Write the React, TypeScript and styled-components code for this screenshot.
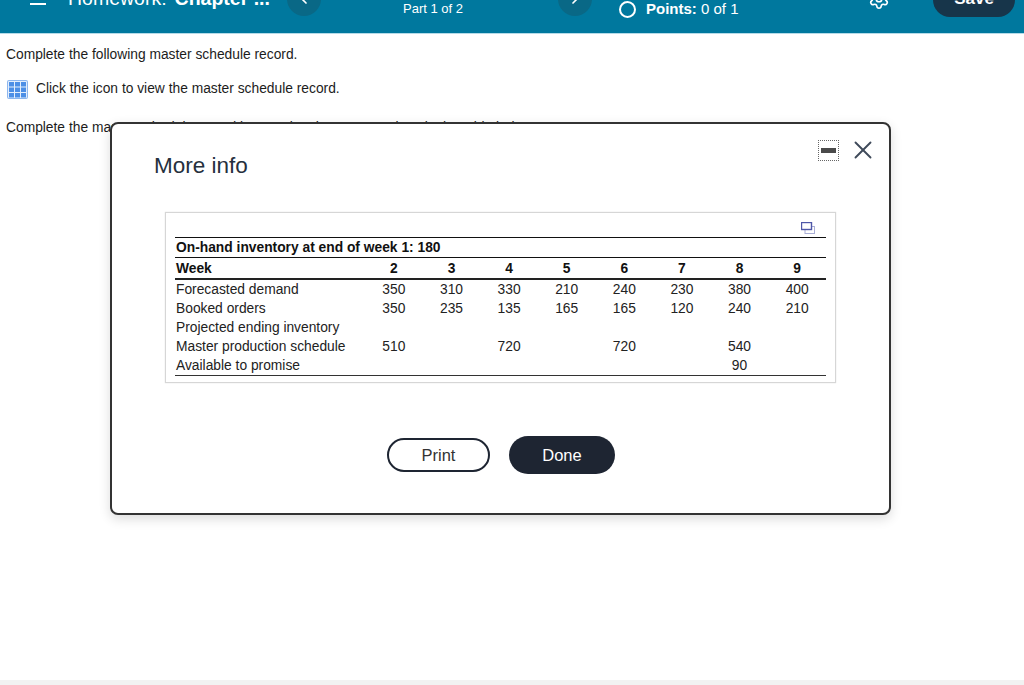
import React from 'react';
import styled, { createGlobalStyle } from 'styled-components';
import { ChevronLeft, ChevronRight, Settings, X } from 'lucide-react';

const GlobalStyle = createGlobalStyle`
  html, body {
    margin: 0;
    padding: 0;
    height: 100%;
    overflow: hidden;
    background: #fff;
    font-family: "Liberation Sans", Arial, sans-serif;
  }
`;

const Page = styled.div`
  position: relative;
  width: 1024px;
  height: 685px;
  display: flex;
  flex-direction: column;
  overflow: hidden;
`;

const Header = styled.header`
  flex: none;
  height: 34px;
  box-sizing: border-box;
  background: #00789e;
  border-bottom: 1px solid #b5dbe8;
  color: #fff;
  display: flex;
  align-items: flex-end;
  overflow: hidden;
`;

const MenuBar = styled.span`
  flex: none;
  width: 16px;
  height: 2px;
  background: #fff;
  margin: 0 0 28px 30px;
`;

const HeaderTitle = styled.div`
  width: 219px;
  margin-left: 22px;
  padding-bottom: 24px;
  font-size: 19.5px;
  line-height: 22px;
  white-space: nowrap;
  b {
    margin-left: 8px;
  }
`;

const NavButton = styled.span`
  flex: none;
  width: 34px;
  height: 34px;
  margin-bottom: 17px;
  border-radius: 50%;
  background: #096886;
  display: flex;
  align-items: center;
  justify-content: center;
`;

const PartSlot = styled.div`
  width: 237px;
  padding: 0 0 15px 82px;
  box-sizing: border-box;
  font-size: 13px;
  line-height: 18px;
  white-space: nowrap;
`;

const PointsGroup = styled.div`
  width: 249px;
  margin-left: 27px;
  padding-bottom: 15px;
  display: flex;
  align-items: center;
  gap: 10px;
  font-size: 15px;
  line-height: 18px;
  b {
    font-weight: 700;
  }
`;

const Ring = styled.span`
  flex: none;
  width: 13px;
  height: 13px;
  border: 2px solid #fff;
  border-radius: 50%;
`;

const GearSlot = styled.span`
  flex: none;
  width: 22px;
  margin-bottom: 23px;
  display: flex;
`;

const SaveButton = styled.span`
  flex: none;
  width: 82px;
  height: 34px;
  margin: 0 0 16px 43px;
  border-radius: 17px;
  background: #17354a;
  font-size: 17px;
  font-weight: 700;
  line-height: 32px;
  text-align: center;
`;

const Content = styled.main`
  padding: 12px 0 0 6px;
  color: #1c1c1c;
  font-size: 13.8px;
  line-height: 17px;
`;

const Paragraph = styled.p`
  margin: 0 0 16px;
  white-space: nowrap;
`;

const IconLine = styled.p`
  margin: 0 0 21px;
  display: flex;
  align-items: center;
  gap: 8px;
`;

const TableIcon = styled.svg`
  flex: none;
  margin: 1px 0 -1px 1px;
`;

const FootBar = styled.div`
  position: absolute;
  left: 0;
  right: 0;
  bottom: 0;
  height: 5px;
  background: #f2f2f2;
`;

const Modal = styled.section`
  position: absolute;
  left: 110px;
  top: 122px;
  width: 781px;
  height: 393px;
  box-sizing: border-box;
  padding: 29px 54px 0 42px;
  background: #fff;
  border: 2px solid #333;
  border-radius: 8px;
  box-shadow: 0 4px 12px rgba(0, 0, 0, 0.14);
  color: #222;
`;

const ModalTop = styled.div`
  display: flex;
  justify-content: space-between;
  align-items: flex-start;
`;

const ModalTitle = styled.h2`
  margin: 0;
  font-size: 22.5px;
  font-weight: 400;
  line-height: 26px;
  color: #26303d;
`;

const WindowControls = styled.div`
  position: absolute;
  top: 11px;
  right: 11px;
  display: flex;
  align-items: center;
  gap: 9px;
`;

const MinimizeButton = styled.span`
  width: 21px;
  height: 21px;
  box-sizing: border-box;
  border: 1px dotted #666;
  display: flex;
  align-items: center;
  justify-content: center;
  &::before {
    content: '';
    width: 15px;
    height: 5px;
    margin-top: 1px;
    background: #4a4a4a;
  }
`;

const TablePanel = styled.div`
  position: relative;
  width: 671px;
  height: 171px;
  box-sizing: border-box;
  margin: 33px 0 0 11px;
  padding: 24px 8px 0 9px;
  border: 1px solid #d6d6d6;
  box-shadow: 0 0 1px #d6d6d6;
`;

const CopyIcon = styled.svg`
  position: absolute;
  top: 9px;
  right: 20px;
`;

const Table = styled.table`
  width: 651px;
  border-collapse: collapse;
  table-layout: fixed;
  font-size: 13.8px;
  color: #222;
  border-bottom: 1px solid #333;
`;

const HeadRow = styled.tr`
  th {
    height: 19px;
    padding: 0;
    color: #111;
    font-weight: 700;
    line-height: 15px;
    text-align: center;
  }
`;

const InventoryRow = styled(HeadRow)`
  border-top: 1px solid #111;
  border-bottom: 1px solid #111;
`;

const WeekRow = styled(HeadRow)`
  border-bottom: 2px solid #222;
  th {
    height: 20px;
  }
`;

const LabelHead = styled.th`
  && {
    padding-left: 1px;
    text-align: left;
    white-space: nowrap;
  }
`;

const BodyRow = styled.tr`
  td {
    height: 19px;
    padding: 0;
    line-height: 15px;
    text-align: center;
  }
`;

const LabelCell = styled.td`
  && {
    padding-left: 1px;
    text-align: left;
    white-space: nowrap;
  }
`;

const Actions = styled.div`
  display: flex;
  align-items: center;
  gap: 19px;
  margin: 53px 0 0 233px;
`;

const PrintButton = styled.button`
  width: 103px;
  height: 34px;
  padding: 0;
  background: #fff;
  border: 2px solid #1e2532;
  border-radius: 17px;
  color: #333;
  font: 16.5px "Liberation Sans", Arial, sans-serif;
`;

const DoneButton = styled.button`
  width: 106px;
  height: 38px;
  padding: 0;
  background: #1e2532;
  border: none;
  border-radius: 19px;
  color: #fff;
  font: 16.5px "Liberation Sans", Arial, sans-serif;
`;

const weeks = ['2', '3', '4', '5', '6', '7', '8', '9'];

const rows: { label: string; values: string[] }[] = [
  { label: 'Forecasted demand', values: ['350', '310', '330', '210', '240', '230', '380', '400'] },
  { label: 'Booked orders', values: ['350', '235', '135', '165', '165', '120', '240', '210'] },
  { label: 'Projected ending inventory', values: ['', '', '', '', '', '', '', ''] },
  { label: 'Master production schedule', values: ['510', '', '720', '', '720', '', '540', ''] },
  { label: 'Available to promise', values: ['', '', '', '', '', '', '90', ''] },
];

const App = () => {
  return (
    <Page>
      <GlobalStyle />
      <Header>
        <MenuBar />
        <HeaderTitle>
          Homework:<b>Chapter ...</b>
        </HeaderTitle>
        <NavButton>
          <ChevronLeft size={16} strokeWidth={2.5} />
        </NavButton>
        <PartSlot>Part 1 of 2</PartSlot>
        <NavButton>
          <ChevronRight size={16} strokeWidth={2.5} />
        </NavButton>
        <PointsGroup>
          <Ring />
          <span>
            <b>Points:</b> 0 of 1
          </span>
        </PointsGroup>
        <GearSlot>
          <Settings size={22} strokeWidth={1.8} />
        </GearSlot>
        <SaveButton>Save</SaveButton>
      </Header>

      <Content>
        <Paragraph>Complete the following master schedule record.</Paragraph>
        <IconLine>
          <TableIcon width="21" height="19" viewBox="0 0 21 19">
            <rect width="21" height="19" rx="2" fill="#8db6ee" />
            <rect x="1" y="1" width="19" height="17" rx="1" fill="#e3eefc" />
            <g fill="#4d8fe6">
              {[2, 7.5, 13].map((y) =>
                [2, 8, 14].map((x) => <rect key={`${x}-${y}`} x={x} y={y} width="5" height="4.5" />)
              )}
            </g>
          </TableIcon>
          Click the icon to view the master schedule record.
        </IconLine>
        <Paragraph>Complete the master schedule record by entering the correct values in the table below.</Paragraph>
      </Content>

      <FootBar />

      <Modal>
        <ModalTop>
          <ModalTitle>More info</ModalTitle>
          <WindowControls>
            <MinimizeButton />
            <X size={30} color="#3f4a5a" strokeWidth={1.5} />
          </WindowControls>
        </ModalTop>

        <TablePanel>
          <CopyIcon width="14" height="12" viewBox="0 0 14 12" fill="none">
            <rect x="4" y="4.5" width="9.5" height="7" stroke="#a9aed6" />
            <rect x="0.5" y="0.5" width="10" height="7" fill="#fff" stroke="#4f58a8" strokeWidth="1.4" />
          </CopyIcon>
          <Table>
            <colgroup>
              <col style={{ width: 190 }} />
              {weeks.map((w) => (
                <col key={w} style={{ width: 57.6 }} />
              ))}
            </colgroup>
            <thead>
              <InventoryRow>
                <LabelHead colSpan={9}>On-hand inventory at end of week 1: 180</LabelHead>
              </InventoryRow>
              <WeekRow>
                <LabelHead>Week</LabelHead>
                {weeks.map((w) => (
                  <th key={w}>{w}</th>
                ))}
              </WeekRow>
            </thead>
            <tbody>
              {rows.map((row) => (
                <BodyRow key={row.label}>
                  <LabelCell>{row.label}</LabelCell>
                  {row.values.map((v, i) => (
                    <td key={i}>{v}</td>
                  ))}
                </BodyRow>
              ))}
            </tbody>
          </Table>
        </TablePanel>

        <Actions>
          <PrintButton>Print</PrintButton>
          <DoneButton>Done</DoneButton>
        </Actions>
      </Modal>
    </Page>
  );
};

export default App;
